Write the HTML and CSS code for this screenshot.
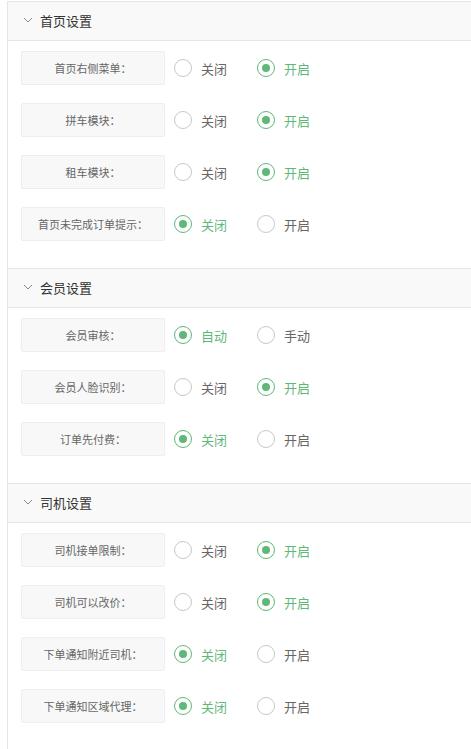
FILE: index.html
```html
<!DOCTYPE html>
<html>
<head>
<meta charset="utf-8">
<link rel="stylesheet" href="styles.css">
</head>
<body>
<div class="card">
  <div class="section">
    <div class="head"><svg class="chev" width="10" height="6" viewBox="0 0 10 6"><path d="M1 1 L5 5 L9 1" fill="none" stroke="#888" stroke-width="1"/></svg><span>首页设置</span></div>
    <div class="body">
      <div class="row"><div class="label">首页右侧菜单：</div><div class="opt"><i class="radio"></i><span>关闭</span></div><div class="opt on"><i class="radio"></i><span>开启</span></div></div>
      <div class="row"><div class="label">拼车模块：</div><div class="opt"><i class="radio"></i><span>关闭</span></div><div class="opt on"><i class="radio"></i><span>开启</span></div></div>
      <div class="row"><div class="label">租车模块：</div><div class="opt"><i class="radio"></i><span>关闭</span></div><div class="opt on"><i class="radio"></i><span>开启</span></div></div>
      <div class="row"><div class="label">首页未完成订单提示：</div><div class="opt on"><i class="radio"></i><span>关闭</span></div><div class="opt"><i class="radio"></i><span>开启</span></div></div>
    </div>
  </div>
  <div class="section">
    <div class="head"><svg class="chev" width="10" height="6" viewBox="0 0 10 6"><path d="M1 1 L5 5 L9 1" fill="none" stroke="#888" stroke-width="1"/></svg><span>会员设置</span></div>
    <div class="body">
      <div class="row"><div class="label">会员审核：</div><div class="opt on"><i class="radio"></i><span>自动</span></div><div class="opt"><i class="radio"></i><span>手动</span></div></div>
      <div class="row"><div class="label">会员人脸识别：</div><div class="opt"><i class="radio"></i><span>关闭</span></div><div class="opt on"><i class="radio"></i><span>开启</span></div></div>
      <div class="row"><div class="label">订单先付费：</div><div class="opt on"><i class="radio"></i><span>关闭</span></div><div class="opt"><i class="radio"></i><span>开启</span></div></div>
    </div>
  </div>
  <div class="section">
    <div class="head"><svg class="chev" width="10" height="6" viewBox="0 0 10 6"><path d="M1 1 L5 5 L9 1" fill="none" stroke="#888" stroke-width="1"/></svg><span>司机设置</span></div>
    <div class="body">
      <div class="row"><div class="label">司机接单限制：</div><div class="opt"><i class="radio"></i><span>关闭</span></div><div class="opt on"><i class="radio"></i><span>开启</span></div></div>
      <div class="row"><div class="label">司机可以改价：</div><div class="opt"><i class="radio"></i><span>关闭</span></div><div class="opt on"><i class="radio"></i><span>开启</span></div></div>
      <div class="row"><div class="label">下单通知附近司机：</div><div class="opt on"><i class="radio"></i><span>关闭</span></div><div class="opt"><i class="radio"></i><span>开启</span></div></div>
      <div class="row"><div class="label">下单通知区域代理：</div><div class="opt on"><i class="radio"></i><span>关闭</span></div><div class="opt"><i class="radio"></i><span>开启</span></div></div>
    </div>
  </div>
</div>
</body>
</html>
```
FILE: styles.css
```css
html, body {
  margin: 0;
  padding: 0;
  background: #fff;
  font-family: "Noto Sans CJK SC", "Noto Sans", sans-serif;
}
.card {
  margin: 1px 0 0 7px;
  border-left: 1px solid #e6e6e6;
  min-height: 760px;
}
.head {
  height: 36px;
  padding-bottom: 2px;
  border-top: 1px solid #e6e6e6;
  border-bottom: 1px solid #e6e6e6;
  background: #f9f9f9;
  display: flex;
  align-items: center;
  font-size: 13px;
  color: #333;
}
.chev {
  margin: 0 7px 0 15px;
}
.body {
  padding: 10px 0 9px 13px;
}
.row {
  display: flex;
  align-items: center;
  margin-bottom: 18px;
}
.label {
  box-sizing: border-box;
  width: 144px;
  height: 34px;
  border: 1px solid #eeeeee;
  border-radius: 2px;
  background: #f8f8f8;
  font-size: 11px;
  color: #666;
  display: flex;
  align-items: center;
  justify-content: center;
  margin-right: 9px;
}
.opt {
  display: flex;
  align-items: center;
  font-size: 13px;
  color: #666;
  margin-right: 30px;
}
.radio {
  box-sizing: border-box;
  width: 18px;
  height: 18px;
  border: 1.5px solid #c8c8c8;
  border-radius: 50%;
  margin-right: 9px;
  display: flex;
  align-items: center;
  justify-content: center;
}
.opt.on {
  color: #5fb878;
}
.opt.on .radio {
  border-color: #5fb878;
}
.opt.on .radio::after {
  content: "";
  width: 8px;
  height: 8px;
  border-radius: 50%;
  background: #5fb878;
}
```
